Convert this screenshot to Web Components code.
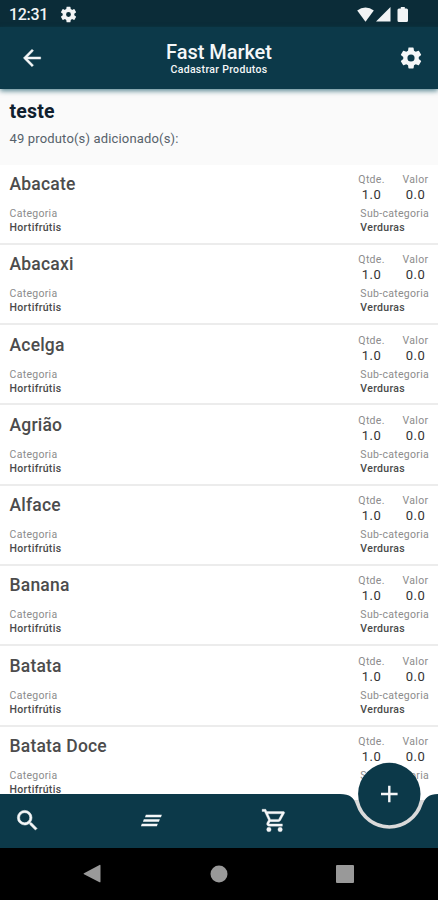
<!DOCTYPE html>
<html lang="pt-BR">
  <head>
    <meta charset="UTF-8" />
    <meta
      name="viewport"
      content="width=device-width, initial-scale=1.0"
    />
    <title>Fast Market</title>
    <style>
      :root {
        --primary: #0c3949;
        --primary-dark: #0b2c38;
      }

      body {
        margin: 0;
        font-family: Roboto, 'Liberation Sans', sans-serif;
        background: #fff;
        overflow: hidden;
      }
    </style>

    <!-- whole screen: bars at the edges, list in the middle -->
    <template id="market-screen-template">
      <style>
        :host {
          display: flex;
          flex-direction: column;
          height: 900px;
          overflow: hidden;
        }

        main {
          flex: 1;
          min-height: 0;
          display: flex;
          flex-direction: column;
          overflow: hidden;
        }
      </style>
      <slot name="top"></slot>
      <main><slot></slot></main>
      <slot name="bottom"></slot>
    </template>

    <!-- android status bar -->
    <template id="status-bar-template">
      <style>
        :host {
          display: flex;
          align-items: center;
          height: 27px;
          flex: none;
          box-sizing: border-box;
          padding: 1px 29px 0 9px;
          background: var(--primary-dark);
          color: #f2f4f5;
        }

        .time {
          width: 51px;
          padding-top: 1px;
          font-size: 16px;
          font-weight: 500;
          line-height: 20px;
          letter-spacing: -0.3px;
        }

        .signals {
          margin-left: auto;
          display: flex;
          align-items: center;
          gap: 2px;
        }

        svg {
          display: block;
          fill: currentColor;
        }
      </style>
      <span class="time"><slot></slot></span>
      <svg width="17" height="17" viewBox="1.5 1.5 21 21"><path d="M19.14 12.94c.04-.3.06-.61.06-.94 0-.32-.02-.64-.07-.94l2.03-1.58a.49.49 0 0 0 .12-.61l-1.92-3.32a.49.49 0 0 0-.59-.22l-2.39.96a7 7 0 0 0-1.62-.94l-.36-2.54a.48.48 0 0 0-.48-.41h-3.84c-.24 0-.43.17-.47.41l-.36 2.54c-.59.24-1.13.57-1.62.94l-2.39-.96a.48.48 0 0 0-.59.22L2.74 8.87a.48.48 0 0 0 .12.61l2.03 1.58a6 6 0 0 0 0 1.88l-2.03 1.58a.49.49 0 0 0-.12.61l1.92 3.32c.12.22.37.29.59.22l2.39-.96c.5.38 1.03.7 1.62.94l.36 2.54c.05.24.24.41.48.41h3.84c.24 0 .44-.17.47-.41l.36-2.54a7 7 0 0 0 1.62-.94l2.39.96c.22.08.47 0 .59-.22l1.92-3.32a.48.48 0 0 0-.12-.61zM12 15a3 3 0 1 1 0-6 3 3 0 0 1 0 6z"/></svg>
      <span class="signals">
        <svg width="17" height="15" viewBox="0 0 17 15"><path d="M8.5 14.7.2 3.6Q4 .4 8.5 .4T16.8 3.6z"/></svg>
        <svg width="15" height="15" viewBox="0 0 15 15"><path d="M0 14.5 14.5 0v14.5z"/></svg>
        <svg width="16" height="17" viewBox="0 0 16 17"><path d="M6 2.5h1.8V1h4v1.5h1.7q1.5 0 1.5 1.5v10.5q0 1.5-1.5 1.5H6q-1.5 0-1.5-1.5V4q0-1.5 1.5-1.5z"/></svg>
      </span>
    </template>

    <!-- app bar with back arrow and settings -->
    <template id="app-bar-template">
      <style>
        :host {
          display: grid;
          grid-template-columns: 26px 1fr 26px;
          align-items: center;
          height: 62px;
          flex: none;
          box-sizing: border-box;
          padding: 0 14px 0 19px;
          background: var(--primary);
          color: #f5f7f8;
          box-shadow: 0 2px 5px #0c5060aa;
          position: relative;
          z-index: 1;
        }

        .titles {
          text-align: center;
          padding: 2px 5px 0 0;
        }

        .title {
          font-size: 20px;
          line-height: 22px;
          font-weight: 500;
          letter-spacing: -0.05px;
        }

        .subtitle {
          font-size: 10.5px;
          line-height: 14px;
          font-weight: 500;
          letter-spacing: 0.32px;
        }

        svg {
          display: block;
          fill: currentColor;
        }
      </style>
      <svg width="26" height="26" viewBox="0 0 24 24"><path d="M20 11H7.83l5.59-5.59L12 4l-8 8 8 8 1.41-1.41L7.83 13H20z" stroke="currentColor" stroke-width=".4"/></svg>
      <div class="titles">
        <div class="title"><slot name="title"></slot></div>
        <div class="subtitle"><slot name="subtitle"></slot></div>
      </div>
      <svg width="26" height="26" viewBox="0 0 24 24"><path d="M19.14 12.94c.04-.3.06-.61.06-.94 0-.32-.02-.64-.07-.94l2.03-1.58a.49.49 0 0 0 .12-.61l-1.92-3.32a.49.49 0 0 0-.59-.22l-2.39.96a7 7 0 0 0-1.62-.94l-.36-2.54a.48.48 0 0 0-.48-.41h-3.84c-.24 0-.43.17-.47.41l-.36 2.54c-.59.24-1.13.57-1.62.94l-2.39-.96a.48.48 0 0 0-.59.22L2.74 8.87a.48.48 0 0 0 .12.61l2.03 1.58a6 6 0 0 0 0 1.88l-2.03 1.58a.49.49 0 0 0-.12.61l1.92 3.32c.12.22.37.29.59.22l2.39-.96c.5.38 1.03.7 1.62.94l.36 2.54c.05.24.24.41.48.41h3.84c.24 0 .44-.17.47-.41l.36-2.54a7 7 0 0 0 1.62-.94l2.39.96c.22.08.47 0 .59-.22l1.92-3.32a.48.48 0 0 0-.12-.61zM12 15.3a3.3 3.3 0 1 1 0-6.6 3.3 3.3 0 0 1 0 6.6z"/></svg>
    </template>

    <!-- list name and product count -->
    <template id="list-summary-template">
      <style>
        :host {
          display: block;
          height: 75.5px;
          flex: none;
          box-sizing: border-box;
          padding: 11px 9.5px 0;
          background: #fafafa;
        }

        .name {
          font-size: 19.5px;
          line-height: 24px;
          font-weight: 700;
          color: #10202e;
          letter-spacing: 0.2px;
        }

        .count {
          margin-top: 6px;
          font-size: 13px;
          line-height: 18px;
          color: #56616a;
          letter-spacing: 0.16px;
        }
      </style>
      <div class="name"><slot name="name"></slot></div>
      <div class="count"><slot></slot></div>
    </template>

    <!-- one product of the list -->
    <template id="product-row-template">
      <style>
        :host {
          display: flex;
          justify-content: space-between;
          height: 80.3px;
          flex: none;
          box-sizing: border-box;
          padding: 7.5px 9px 0 9.5px;
          border-bottom: 2px solid #ececec;
          background: #fff;
          color: #4a4a4a;
        }

        .name {
          height: 34px;
          font-size: 17.5px;
          line-height: 24px;
          font-weight: 500;
          letter-spacing: 0.2px;
          color: #4c4c4c;
        }

        .label {
          font-size: 10.5px;
          line-height: 15px;
          color: #8c8c8c;
          letter-spacing: 0.3px;
        }

        .text {
          font-size: 10.5px;
          line-height: 13px;
          font-weight: 500;
          letter-spacing: 0.32px;
        }

        .numbers {
          display: flex;
          justify-content: space-between;
          width: 70px;
          height: 34px;
          text-align: center;
        }

        .value {
          font-size: 13px;
          line-height: 15px;
          letter-spacing: 0.5px;
          color: #333;
        }

        .sub {
          padding-left: 2px;
        }
      </style>
      <div>
        <div class="name"><slot></slot></div>
        <div class="label">Categoria</div>
        <div class="text"><slot name="category">Hortifrútis</slot></div>
      </div>
      <div>
        <div class="numbers">
          <div>
            <div class="label">Qtde.</div>
            <div class="value"><slot name="amount">1.0</slot></div>
          </div>
          <div>
            <div class="label">Valor</div>
            <div class="value"><slot name="price">0.0</slot></div>
          </div>
        </div>
        <div class="sub">
          <div class="label">Sub-categoria</div>
          <div class="text"><slot name="subcategory">Verduras</slot></div>
        </div>
      </div>
    </template>

    <!-- bottom bar, notched around the floating button -->
    <template id="bottom-bar-template">
      <style>
        :host {
          display: block;
          height: 53.5px;
          flex: none;
          position: relative;
          z-index: 1;
          color: #f5f7f8;
        }

        /* the bar shape and the button lie over the list */
        .shape {
          position: absolute;
          left: 0;
          bottom: 0;
          display: block;
        }

        nav {
          position: relative;
          display: flex;
          align-items: center;
          height: 53px;
          padding-left: 14px;
          gap: 96.5px;
        }

        nav svg {
          display: block;
          fill: currentColor;
        }
      </style>
      <svg class="shape" width="438" height="90" viewBox="0 0 438 90">
        <path d="M352 42H427V75H352z" fill="#dadada"/>
        <path d="M340 36C350 36 354 40 356 46.5A35 35 0 0 0 422.6 46.5C425 40 429 36 438 36V90H0V36z" fill="var(--primary)"/>
        <circle cx="389.3" cy="36" r="31.2" fill="var(--primary)"/>
        <path d="M381 36h16.6M389.3 27.7v16.6" stroke="#f5f7f8" stroke-width="2.4"/>
      </svg>
      <nav>
        <svg width="27" height="27" viewBox="0 0 24 24"><path d="M15.5 14h-.79l-.28-.27A6.47 6.47 0 0 0 16 9.5 6.5 6.5 0 1 0 9.5 16c1.61 0 3.09-.59 4.23-1.57l.27.28v.79l5 4.99L20.49 19zm-6 0a4.5 4.5 0 1 1 0-9 4.5 4.5 0 0 1 0 9z" stroke="currentColor" stroke-width=".5"/></svg>
        <svg width="27" height="27" viewBox="0 0 24 24"><path d="M4.4 13.2h14.2l.8-2.4H5.200zM2.600 17.200h14.200l.8-2.400H3.400zM7 6.800l-.8 2.400h14.200l.8-2.400z"/></svg>
        <svg width="27" height="27" viewBox="0 0 24 24"><path d="M15.55 13c.75 0 1.41-.41 1.75-1.03l3.58-6.49A.996.996 0 0 0 20.01 4H5.21l-.94-2H1v2h2l3.6 7.59-1.35 2.44C4.52 15.37 5.48 17 7 17h12v-2H7l1.1-2zM6.16 6h12.15l-2.76 5H8.53zM7 18a2 2 0 1 0 0 4 2 2 0 0 0 0-4zm10 0a2 2 0 1 0 0 4 2 2 0 0 0 0-4z" stroke="currentColor" stroke-width=".3"/></svg>
      </nav>
    </template>

    <!-- android navigation keys -->
    <template id="system-keys-template">
      <style>
        :host {
          display: flex;
          align-items: center;
          justify-content: space-between;
          height: 52.5px;
          flex: none;
          box-sizing: border-box;
          padding: 0 84px 0 83px;
          background: #000;
          position: relative;
          z-index: 1;
        }

        svg {
          display: block;
          fill: #999;
        }
      </style>
      <svg width="18" height="20" viewBox="0 0 18 20"><path d="M1 9.3 16.5 1q1-.5 1 .7v15.8q0 1.2-1 .7L1 10.3q-1-.5 0-1z"/></svg>
      <svg width="18" height="18" viewBox="0 0 18 18"><circle cx="9" cy="9" r="8.5"/></svg>
      <svg width="18" height="18" viewBox="0 0 18 18"><rect width="18" height="18" rx="1"/></svg>
    </template>
  </head>

  <body>
    <market-screen>
      <status-bar slot="top">12:31</status-bar>
      <app-bar slot="top">
        <span slot="title">Fast Market</span>
        <span slot="subtitle">Cadastrar Produtos</span>
      </app-bar>

      <list-summary>
        <span slot="name">teste</span>
        49 produto(s) adicionado(s):
      </list-summary>
      <product-row>Abacate</product-row>
      <product-row>Abacaxi</product-row>
      <product-row>Acelga</product-row>
      <product-row>Agrião</product-row>
      <product-row>Alface</product-row>
      <product-row>Banana</product-row>
      <product-row>Batata</product-row>
      <product-row>Batata Doce</product-row>

      <bottom-bar slot="bottom"></bottom-bar>
      <system-keys slot="bottom"></system-keys>
    </market-screen>

    <script>
      // base class: clones the template named after the element
      class TemplateElement extends HTMLElement {
        constructor() {
          super();
          const template = document.getElementById(
            `${this.localName}-template`
          );
          const shadowRoot = this.attachShadow({ mode: 'open' });
          shadowRoot.appendChild(template.content.cloneNode(true));
        }
      }

      class MarketScreen extends TemplateElement {}
      class StatusBar extends TemplateElement {}
      class AppBar extends TemplateElement {}
      class ListSummary extends TemplateElement {}
      class ProductRow extends TemplateElement {}
      class BottomBar extends TemplateElement {}
      class SystemKeys extends TemplateElement {}

      // register custom elements
      customElements.define('market-screen', MarketScreen);
      customElements.define('status-bar', StatusBar);
      customElements.define('app-bar', AppBar);
      customElements.define('list-summary', ListSummary);
      customElements.define('product-row', ProductRow);
      customElements.define('bottom-bar', BottomBar);
      customElements.define('system-keys', SystemKeys);
    </script>
  </body>
</html>
